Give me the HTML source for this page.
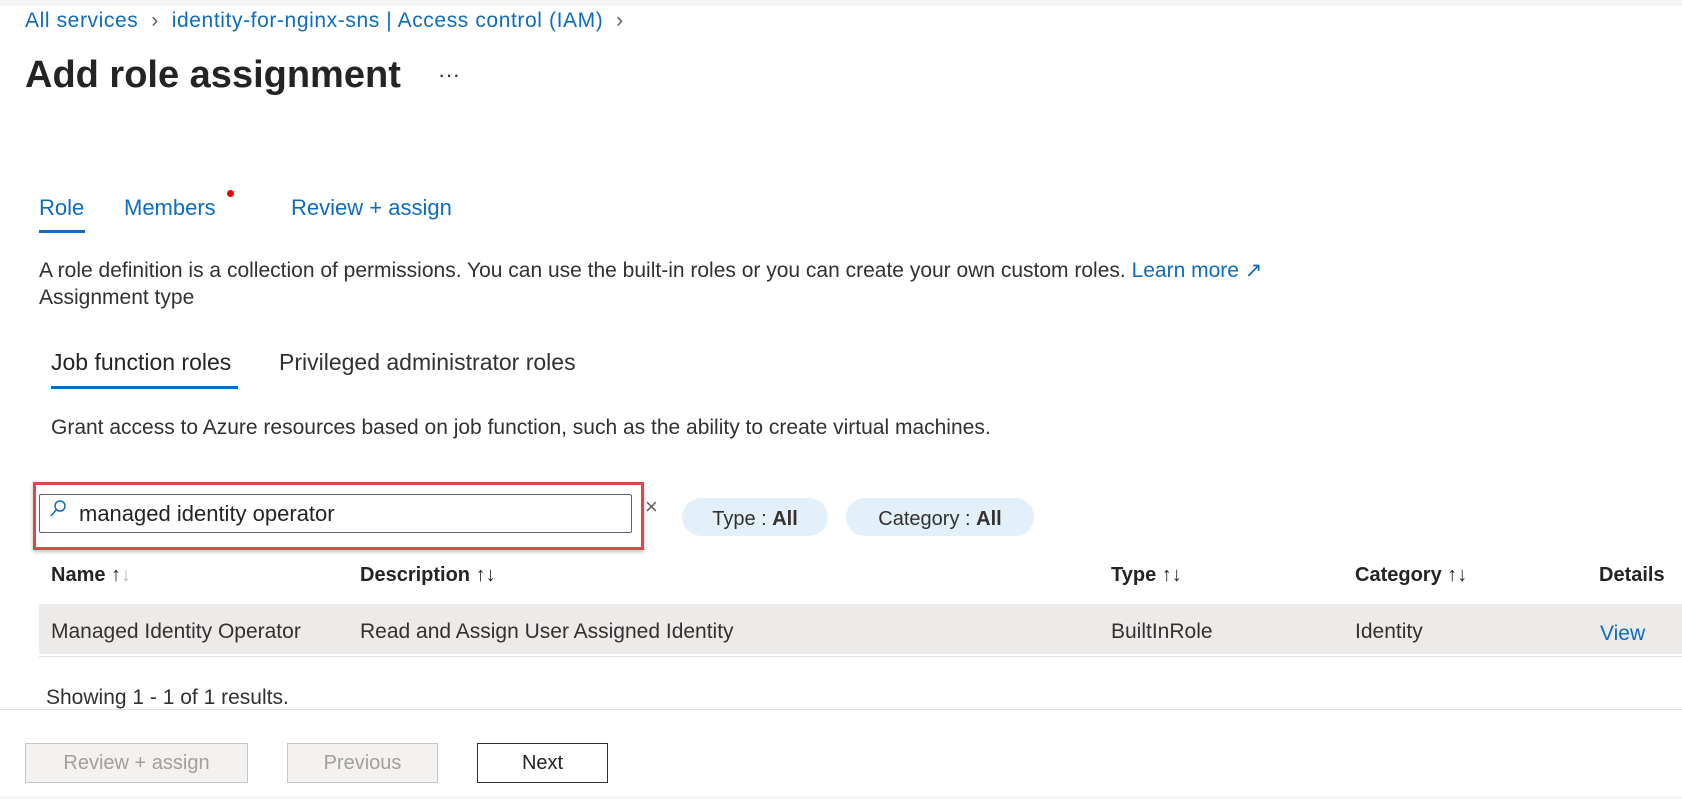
<!DOCTYPE html>
<html><head><meta charset="utf-8"><style>
*{box-sizing:border-box;margin:0;padding:0}
body{width:1682px;height:799px;background:#fff;font-family:"Liberation Sans",sans-serif;color:#323130;position:relative;overflow:hidden}
.a{position:absolute;white-space:nowrap}
.blue{color:#0f6cbd}
.btn{position:absolute;height:40px;border:1px solid #8a8886;font-size:20px;display:flex;align-items:center;justify-content:center}
.pill{position:absolute;height:38px;border-radius:19px;background:#e3f0fa;font-size:20px;display:flex;align-items:center;justify-content:center}
</style></head><body>
<div style="position:absolute;left:0;top:0;width:1682px;height:6px;background:#f4f4f4"></div>
<div class="a blue" style="left:25px;top:9px;font-size:21px;letter-spacing:0.6px">All services <span style="color:#605e5c">&nbsp;›&nbsp;</span> identity-for-nginx-sns | Access control (IAM) <span style="color:#605e5c">&nbsp;›</span></div>
<div class="a" style="left:25px;top:54px;font-size:38px;font-weight:bold;color:#252423">Add role assignment</div>
<div class="a" style="left:438px;top:62px;font-size:22px">···</div>

<div class="a blue" style="left:39px;top:195px;font-size:22px">Role</div>
<div style="position:absolute;left:39px;top:230px;width:46px;height:3px;background:#0f6cbd"></div>
<div class="a blue" style="left:124px;top:195px;font-size:22px">Members</div>
<div style="position:absolute;left:227px;top:190px;width:7px;height:7px;border-radius:50%;background:#e00"></div>
<div class="a blue" style="left:291px;top:195px;font-size:22px">Review + assign</div>

<div class="a" style="left:39px;top:258px;font-size:21px">A role definition is a collection of permissions. You can use the built-in roles or you can create your own custom roles. <span class="blue">Learn more ↗</span></div>
<div class="a" style="left:39px;top:286px;font-size:21px">Assignment type</div>

<div class="a" style="left:51px;top:349px;font-size:23px;color:#252423">Job function roles</div>
<div style="position:absolute;left:51px;top:386px;width:187px;height:3px;background:#0f6cbd"></div>
<div class="a" style="left:279px;top:349px;font-size:23px">Privileged administrator roles</div>

<div class="a" style="left:51px;top:416px;font-size:21px">Grant access to Azure resources based on job function, such as the ability to create virtual machines.</div>

<div style="position:absolute;left:33px;top:482px;width:611px;height:68px;border:3px solid #d9484a;box-shadow:0 2px 4px rgba(0,0,0,.25)"></div>
<div style="position:absolute;left:39px;top:494px;width:593px;height:39px;border:1px solid #6b5a8a;border-radius:2px;background:#fff"></div>
<svg style="position:absolute;left:48px;top:499px" width="20" height="22" viewBox="0 0 20 22"><circle cx="12" cy="7" r="5" fill="none" stroke="#0f6cbd" stroke-width="1.5"/><line x1="8.5" y1="10.5" x2="3" y2="17" stroke="#0f6cbd" stroke-width="1.5"/></svg>
<div class="a" style="left:79px;top:501px;font-size:22px;color:#252423">managed identity operator</div>
<div class="a" style="left:645px;top:494px;font-size:22px;color:#605e5c">×</div>
<div class="pill" style="left:682px;top:498px;width:146px;padding-top:4px">Type :&nbsp;<b>All</b></div>
<div class="pill" style="left:846px;top:498px;width:188px;padding-top:4px">Category :&nbsp;<b>All</b></div>

<div class="a" style="left:51px;top:564px;font-size:20px;font-weight:bold;color:#252423">Name <span style="font-weight:normal">↑<span style="color:#bbb">↓</span></span></div>
<div class="a" style="left:360px;top:564px;font-size:20px;font-weight:bold;color:#252423">Description <span style="font-weight:normal">↑↓</span></div>
<div class="a" style="left:1111px;top:564px;font-size:20px;font-weight:bold;color:#252423">Type <span style="font-weight:normal">↑↓</span></div>
<div class="a" style="left:1355px;top:564px;font-size:20px;font-weight:bold;color:#252423">Category <span style="font-weight:normal">↑↓</span></div>
<div class="a" style="left:1599px;top:564px;font-size:20px;font-weight:bold;color:#252423">Details</div>

<div style="position:absolute;left:39px;top:604px;width:1643px;height:50px;background:#edebe9"></div>
<div style="position:absolute;left:39px;top:656px;width:1643px;height:1px;background:#e1dfdd"></div>
<div class="a" style="left:51px;top:620px;font-size:21px">Managed Identity Operator</div>
<div class="a" style="left:360px;top:620px;font-size:21px">Read and Assign User Assigned Identity</div>
<div class="a" style="left:1111px;top:620px;font-size:21px">BuiltInRole</div>
<div class="a" style="left:1355px;top:620px;font-size:21px">Identity</div>
<div class="a blue" style="left:1600px;top:622px;font-size:21px">View</div>

<div class="a" style="left:46px;top:686px;font-size:21px">Showing 1 - 1 of 1 results.</div>
<div style="position:absolute;left:0;top:709px;width:1682px;height:1px;background:#e1dfdd"></div>

<div class="btn" style="left:25px;top:743px;width:223px;background:#f3f2f1;color:#a19f9d;border-color:#c8c6c4">Review + assign</div>
<div class="btn" style="left:287px;top:743px;width:151px;background:#f3f2f1;color:#a19f9d;border-color:#c8c6c4">Previous</div>
<div class="btn" style="left:477px;top:743px;width:131px;background:#fff;color:#252423;border-color:#323130">Next</div>
<div style="position:absolute;left:0;top:796px;width:1682px;height:3px;background:#f4f4f4"></div>
</body></html>
